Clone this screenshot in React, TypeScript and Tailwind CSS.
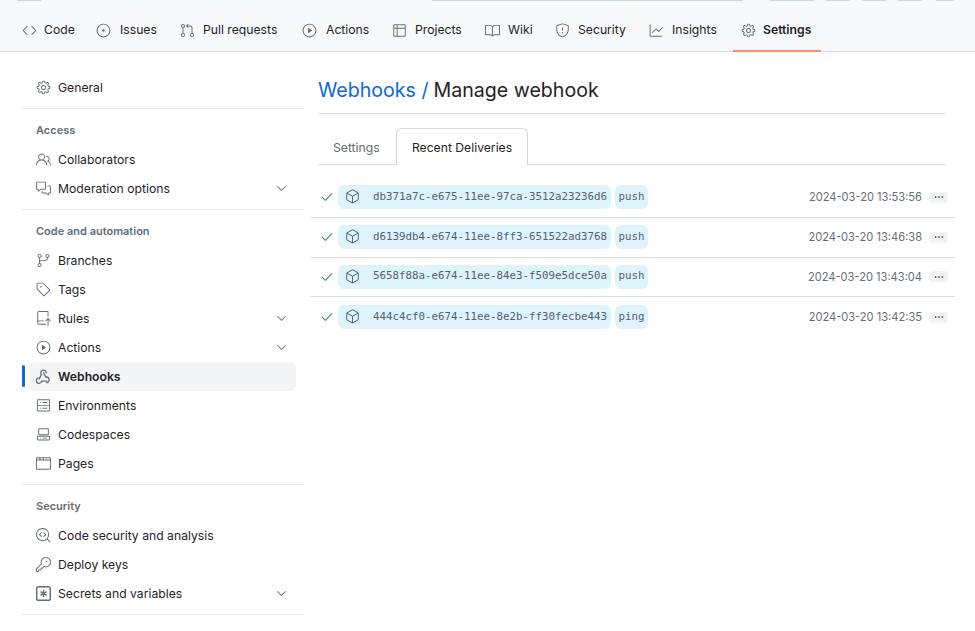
import type { ComponentType } from "react";
import {
  GoBook,
  GoBrowser,
  GoCheck,
  GoChevronDown,
  GoCode,
  GoCodescan,
  GoCodespaces,
  GoCommentDiscussion,
  GoGear,
  GoGitBranch,
  GoGitPullRequest,
  GoGraph,
  GoIssueOpened,
  GoKebabHorizontal,
  GoKey,
  GoPackage,
  GoPeople,
  GoPlay,
  GoRepoPush,
  GoServer,
  GoShield,
  GoTable,
  GoTag,
} from "react-icons/go";

type Icon = ComponentType<{ className?: string }>;
type NavItem = { label: string; icon: Icon; chevron?: boolean; active?: boolean };

function WebhookIcon({ className }: { className?: string }) {
  return (
    <svg viewBox="0 0 16 16" fill="none" stroke="currentColor" strokeWidth="1.4" strokeLinecap="round" className={className}>
      <path d="M11 4.2a3 3 0 1 0-5.2 2.1L3.4 10.6" />
      <path d="M2.2 9.4a3 3 0 1 0 3.9 3.6h5.2" />
      <path d="M8 4.2l2.5 4.4a3 3 0 1 1 .9 6" />
    </svg>
  );
}

function KeyAsteriskIcon({ className }: { className?: string }) {
  return (
    <svg viewBox="0 0 16 16" fill="currentColor" className={className}>
      <path d="M0 2.75A2.75 2.75 0 0 1 2.75 0h10.5A2.75 2.75 0 0 1 16 2.75v10.5A2.75 2.75 0 0 1 13.25 16H2.75A2.75 2.75 0 0 1 0 13.25ZM2.75 1.5c-.69 0-1.25.56-1.25 1.25v10.5c0 .69.56 1.25 1.25 1.25h10.5c.69 0 1.25-.56 1.25-1.25V2.75c0-.69-.56-1.25-1.25-1.25Z" />
      <path d="M8 4a.75.75 0 0 1 .75.75V6.7l1.69-.975a.75.75 0 0 1 .75 1.3L9.5 8l1.69.975a.75.75 0 0 1-.75 1.3L8.75 9.3v1.95a.75.75 0 0 1-1.5 0V9.3l-1.69.975a.75.75 0 0 1-.75-1.3L6.5 8l-1.69-.975a.75.75 0 0 1 .75-1.3L7.25 6.7V4.75A.75.75 0 0 1 8 4Z" />
    </svg>
  );
}

const TABS: { label: string; icon: Icon; active?: boolean; cls: string }[] = [
  { label: "Code", icon: GoCode, cls: "w-[74px] gap-[7px]" },
  { label: "Issues", icon: GoIssueOpened, cls: "w-[84px] gap-[9px]" },
  { label: "Pull requests", icon: GoGitPullRequest, cls: "w-[122px] gap-2" },
  { label: "Actions", icon: GoPlay, cls: "w-[90px] gap-[9px]" },
  { label: "Projects", icon: GoTable, cls: "w-[93px] gap-2" },
  { label: "Wiki", icon: GoBook, cls: "w-[70px] gap-2" },
  { label: "Security", icon: GoShield, cls: "w-[94px] gap-2" },
  { label: "Insights", icon: GoGraph, cls: "w-[92px] gap-2" },
  { label: "Settings", icon: GoGear, active: true, cls: "w-[88px] gap-[7px]" },
];

const SECTIONS: { title?: string; items: NavItem[] }[] = [
  { items: [{ label: "General", icon: GoGear }] },
  {
    title: "Access",
    items: [
      { label: "Collaborators", icon: GoPeople },
      { label: "Moderation options", icon: GoCommentDiscussion, chevron: true },
    ],
  },
  {
    title: "Code and automation",
    items: [
      { label: "Branches", icon: GoGitBranch },
      { label: "Tags", icon: GoTag },
      { label: "Rules", icon: GoRepoPush, chevron: true },
      { label: "Actions", icon: GoPlay, chevron: true },
      { label: "Webhooks", icon: WebhookIcon, active: true },
      { label: "Environments", icon: GoServer },
      { label: "Codespaces", icon: GoCodespaces },
      { label: "Pages", icon: GoBrowser },
    ],
  },
  {
    title: "Security",
    items: [
      { label: "Code security and analysis", icon: GoCodescan },
      { label: "Deploy keys", icon: GoKey },
      { label: "Secrets and variables", icon: KeyAsteriskIcon, chevron: true },
    ],
  },
];

const DELIVERIES = [
  { guid: "db371a7c-e675-11ee-97ca-3512a23236d6", event: "push", time: "2024-03-20 13:53:56" },
  { guid: "d6139db4-e674-11ee-8ff3-651522ad3768", event: "push", time: "2024-03-20 13:46:38" },
  { guid: "5658f88a-e674-11ee-84e3-f509e5dce50a", event: "push", time: "2024-03-20 13:43:04" },
  { guid: "444c4cf0-e674-11ee-8e2b-ff30fecbe443", event: "ping", time: "2024-03-20 13:42:35" },
];

export default function App() {
  return (
    <div className="relative h-[631px] w-[975px] overflow-hidden bg-white font-['Inter',sans-serif] text-[12.2px] text-[#1f2328]">
      {/* Repo tabs */}
      <header className="relative h-[52px] border-b border-[#d8dee4] bg-[#f6f8fa]">
        {/* leftovers of the cropped top bar */}
        <div className="absolute left-[17px] top-0 h-px w-[24px] bg-[#d0d7de]" />
        <div className="absolute left-[432px] top-0 h-px w-[311px] bg-[#d0d7de]" />
        <div className="absolute left-[770px] top-0 h-px w-[44px] bg-[#d0d7de]" />
        <div className="absolute left-[826px] top-0 h-px w-[24px] bg-[#d0d7de]" />
        <div className="absolute left-[862px] top-0 h-px w-[24px] bg-[#d0d7de]" />
        <div className="absolute left-[898px] top-0 h-px w-[24px] bg-[#d0d7de]" />
        <div className="absolute left-[936px] top-0 h-px w-[18px] bg-[#d0d7de]" />
        <nav className="flex h-[51px] pl-[14px]">
          {TABS.map((t) => (
            <div
              key={t.label}
              className={
                "flex h-[52px] shrink-0 items-center pl-2 " +
                t.cls +
                (t.active ? " border-b-2 border-[#fd8c73] pt-[10px] font-semibold" : " pt-[8px]")
              }
            >
              <t.icon className="h-[15px] w-[15px] shrink-0 text-[#656d76]" />
              <span className="whitespace-nowrap">{t.label}</span>
            </div>
          ))}
        </nav>
      </header>

      <div className="flex pl-[22px] pr-[29px]">
        {/* Sidebar */}
        <aside className="w-[282px] shrink-0 pt-[21px]">
          {SECTIONS.map((s, i) => (
            <div key={i}>
              {s.title && (
                <h3 className="h-[36px] pl-[14px] pt-[13px] text-[11px] font-semibold leading-4 text-[#656d76]">{s.title}</h3>
              )}
              {s.items.map((item) => (
                <div key={item.label} className="relative">
                  {item.active && <span className="absolute left-0 top-[3px] h-[22px] w-[3px] rounded bg-[#0969da]" />}
                  <div
                    className={
                      "ml-[7px] mr-2 flex h-[29px] items-center rounded-md pl-[7px] pr-[7px] " +
                      (item.active ? "bg-[#f3f4f6] font-semibold" : "")
                    }
                  >
                    <item.icon className="h-[15px] w-[15px] shrink-0 text-[#656d76]" />
                    <span className="ml-[7px] flex-1 whitespace-nowrap pt-px">{item.label}</span>
                    {item.chevron && <GoChevronDown className="h-[15px] w-[15px] text-[#656d76]" />}
                  </div>
                </div>
              ))}
              <div className="mt-[6px] h-px bg-[#e6e9ec]" />
            </div>
          ))}
        </aside>

        {/* Main */}
        <main className="ml-[14px] min-w-0 flex-1">
          <h1 className="flex h-[62px] items-center border-b border-[#d8dee4] pt-[17px] text-[19.6px] leading-none">
            <a className="text-[#0969da]">Webhooks /</a>
            <span className="ml-[5px]">Manage webhook</span>
          </h1>

          <div className="mt-[14px] flex h-[37px] border-b border-[#d0d7de]">
            <div className="flex h-[37px] w-[78px] items-center pl-[15px] pt-[4px] text-[#656d76]">Settings</div>
            <div className="-mb-px flex h-[37px] w-[132px] items-center justify-center rounded-t-md border border-b-0 border-[#d0d7de] bg-white pt-[3px]">
              Recent Deliveries
            </div>
          </div>

          <div className="-ml-2 -mr-[9px] mt-[13px]">
            {DELIVERIES.map((d, i) => (
              <div
                key={d.guid}
                className={
                  "flex h-[39.75px] items-center pl-[10px] pr-[7px] " +
                  (i < DELIVERIES.length - 1 ? "border-b border-[#d8dee4]" : "")
                }
              >
                <GoCheck className="h-[14px] w-[14px] shrink-0 text-[#1a7f37]" />
                <div className="ml-[4px] flex h-[24px] w-[273px] items-center rounded-md bg-[#ddf4ff] pb-px pl-[7px]">
                  <GoPackage className="h-[15px] w-[15px] shrink-0 text-[#57606a]" />
                  <span className="ml-[13px] whitespace-nowrap font-['DejaVu_Sans_Mono',monospace] text-[10.8px] text-[#57606a]">
                    {d.guid}
                  </span>
                </div>
                <div className="ml-1 flex h-[24px] w-[33px] items-center justify-center rounded-md bg-[#ddf4ff] pb-px font-['DejaVu_Sans_Mono',monospace] text-[10.8px] text-[#57606a]">
                  {d.event}
                </div>
                <div className="ml-auto text-[11.1px] text-[#656d76]">{d.time}</div>
                <div className="ml-[7px] flex h-[11px] w-[19px] items-center justify-center rounded-sm bg-[#f1f2f4]">
                  <GoKebabHorizontal className="h-[10px] w-[10px] text-[#1f2328]" />
                </div>
              </div>
            ))}
          </div>
        </main>
      </div>
    </div>
  );
}
